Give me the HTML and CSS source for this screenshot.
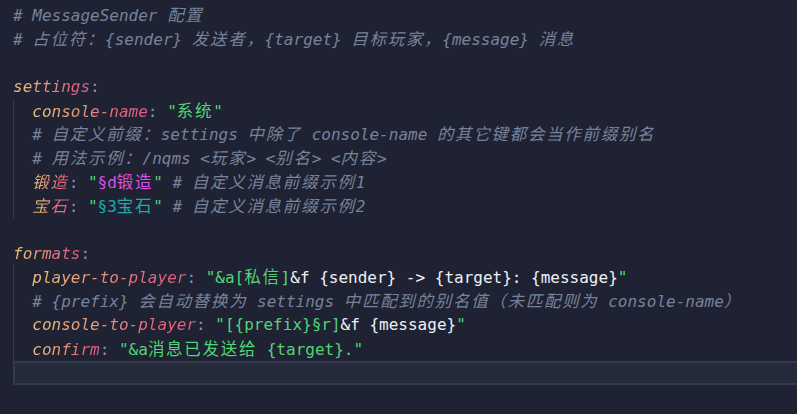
FILE: index.html
```html
<!DOCTYPE html>
<html lang="zh">
<head>
<meta charset="utf-8">
<title>config.yml</title>
<link rel="stylesheet" href="styles.css">
</head>
<body>
<div class="editor">
  <div class="ln first"><span class="cm"># NQMessage <span class="h">配置文件</span> (config.yml) by yang</span></div>
  <div class="ln"><span class="cm"># MessageSender <span class="h">配置</span></span></div>
  <div class="ln"><span class="cm"># <span class="h">占位符：</span>{sender} <span class="h">发送者，</span>{target} <span class="h">目标玩家，</span>{message} <span class="h">消息</span></span></div>
  <div class="ln"></div>
  <div class="ln"><span class="k">settings</span><span class="p">:</span></div>
  <div class="blk">
    <div class="ln">  <span class="k">console-name</span><span class="p">:</span> <span class="s">"<span class="h">系统</span>"</span></div>
    <div class="ln">  <span class="cm"># <span class="h">自定义前缀：</span>settings <span class="h">中除了</span> console-name <span class="h">的其它键都会当作前缀别名</span></span></div>
    <div class="ln">  <span class="cm"># <span class="h">用法示例：</span>/nqms &lt;<span class="h">玩家</span>&gt; &lt;<span class="h">别名</span>&gt; &lt;<span class="h">内容</span>&gt;</span></div>
    <div class="ln">  <span class="k"><span class="h">锻造</span></span><span class="p">:</span> <span class="s">"</span><span class="mg">§d<span class="h">锻造</span></span><span class="s">"</span> <span class="cm"># <span class="h">自定义消息前缀示例</span>1</span></div>
    <div class="ln">  <span class="k"><span class="h">宝石</span></span><span class="p">:</span> <span class="s">"</span><span class="tl">§3<span class="h">宝石</span></span><span class="s">"</span> <span class="cm"># <span class="h">自定义消息前缀示例</span>2</span></div>
  </div>
  <div class="ln"></div>
  <div class="ln"><span class="k">formats</span><span class="p">:</span></div>
  <div class="blk">
    <div class="ln">  <span class="k">player-to-player</span><span class="p">:</span> <span class="s">"&amp;a[<span class="h">私信</span>]</span><span class="w">&amp;f {sender} -&gt; {target}: {message}</span><span class="s">"</span></div>
    <div class="ln">  <span class="cm"># {prefix} <span class="h">会自动替换为</span> settings <span class="h">中匹配到的别名值（未匹配则为</span> console-name<span class="h">）</span></span></div>
    <div class="ln">  <span class="k">console-to-player</span><span class="p">:</span> <span class="s">"[{prefix}§r]</span><span class="w">&amp;f {message}</span><span class="s">"</span></div>
    <div class="ln">  <span class="k">confirm</span><span class="p">:</span> <span class="s">"&amp;a<span class="h">消息已发送给</span> {target}."</span></div>
    <div class="ln cur"></div>
  </div>
</div>
</body>
</html>
```

FILE: styles.css
```css
html, body {
  margin: 0;
  padding: 0;
  background: #1e2233;
  overflow: hidden;
}

.editor {
  width: 797px;
  height: 414px;
  padding-left: 13px;
  box-sizing: border-box;
  font-family: "DejaVu Sans Mono", "Noto Sans CJK SC", monospace;
  font-size: 16px;
  color: #e6e8ee;
}

.ln {
  height: 23.85px;
  line-height: 23.85px;
  white-space: pre;
}

.first {
  margin-top: -20.65px;
}

.blk {
  background: linear-gradient(#353b50, #353b50) no-repeat 0 0 / 1px 100%;
}

.cur {
  box-sizing: border-box;
  border: 2px solid #33394e;
  border-right: none;
  background: #252a3b;
  margin-right: -2px;
}

.h {
  font-family: "Noto Sans CJK SC", sans-serif;
  font-size: 16.5px;
  letter-spacing: 1.7px;
}

.cm {
  color: #78829a;
  font-style: italic;
}

.k {
  font-style: italic;
  background: linear-gradient(90deg, #ebc574 0%, #e8977a 40%, #e46a80 75%, #e05a82 100%);
  -webkit-background-clip: text;
  background-clip: text;
  color: transparent;
}

.p {
  color: #8b92a4;
}

.s {
  color: #52d476;
}

.w {
  color: #eef0f4;
}

.mg {
  color: #d950e4;
}

.tl {
  color: #1faaac;
}
```
